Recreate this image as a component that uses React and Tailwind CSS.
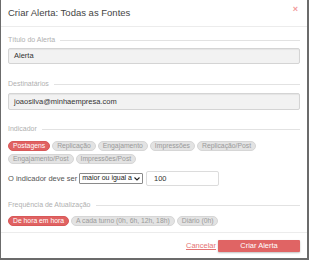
import { useState } from 'react';

const indicators = ['Postagens', 'Replicação', 'Engajamento', 'Impressões', 'Replicação/Post', 'Engajamento/Post', 'Impressões/Post'];
const frequencies = ['De hora em hora', 'A cada turno (0h, 6h, 12h, 18h)', 'Diário (0h)'];

function Chip({ label, active }) {
  return (
    <span
      className={
        active
          ? 'h-[10px] px-[4px] rounded-full bg-[#e06262] border border-[#d85858] text-white text-[6.8px] leading-[8px] flex items-center whitespace-nowrap'
          : 'h-[10px] px-[4px] rounded-full bg-[#e3e3e3] border border-[#d6d6d6] text-[#9a9a9a] text-[6.8px] leading-[8px] flex items-center whitespace-nowrap'
      }
    >
      {label}
    </span>
  );
}

function Legend({ children }) {
  return (
    <div className="flex items-center gap-[5px] h-[10px]">
      <span className="text-[7px] text-[#b0b0b0] whitespace-nowrap">{children}</span>
      <div className="flex-1 h-px bg-[#e2e2e2]" />
    </div>
  );
}

export default function App() {
  const [indicator] = useState('Postagens');
  const [freq] = useState('De hora em hora');

  return (
    <div className="w-[309px] h-[260px] bg-[#6b6b6b] pl-[1px] pr-[2px] pb-[2px] font-['Liberation_Sans',Arial,sans-serif]">
      <div className="relative w-full h-[258px] bg-white flex flex-col">
        <div className="h-[27px] border-b border-[#ececec] flex items-center px-[7px]">
          <h1 className="text-[9.5px] text-[#444]">Criar Alerta: Todas as Fontes</h1>
        </div>
        <span className="absolute right-[9px] top-[3px] text-[9px] font-bold text-[#f29a9a]">×</span>

        <div className="px-[7px] pt-[8px] flex flex-col">
          <Legend>Título do Alerta</Legend>
          <div className="mt-[3px] h-[16px] rounded-[2px] bg-[#f2f2f2] border border-[#d4d4d4] shadow-[inset_0_1px_1px_rgba(0,0,0,0.06)] flex items-center px-[5px] text-[7.5px] text-[#333]">
            Alerta
          </div>

          <div className="mt-[15px]">
            <Legend>Destinatários</Legend>
          </div>
          <div className="mt-[4px] h-[17px] rounded-[2px] bg-[#f2f2f2] border border-[#d4d4d4] shadow-[inset_0_1px_1px_rgba(0,0,0,0.06)] flex items-center px-[5px] text-[7.5px] text-[#333]">
            joaosilva@minhaempresa.com
          </div>

          <div className="mt-[14px]">
            <Legend>Indicador</Legend>
          </div>
          <div className="mt-[7px] flex flex-wrap gap-x-[2px] gap-y-[3px]">
            {indicators.map((i) => (
              <Chip key={i} label={i} active={i === indicator} />
            ))}
          </div>

          <div className="mt-[7px] flex items-center h-[15px]">
            <span className="text-[7.5px] text-[#555] mr-[2px] whitespace-nowrap">O indicador deve ser</span>
            <div className="h-[11px] border border-[#8a8a8a] rounded-[1px] bg-white flex items-center gap-[2px] px-[2px] text-[7px] text-[#222] whitespace-nowrap">
              <span>maior ou igual a</span>
              <svg width="6" height="4" viewBox="0 0 6 4">
                <path d="M0.5 0.5 L3 3 L5.5 0.5" fill="none" stroke="#222" strokeWidth="1.1" />
              </svg>
            </div>
            <div className="ml-[3px] h-[15px] w-[73px] border border-[#dcdcdc] rounded-[2px] bg-white flex items-center px-[7px] text-[7.5px] text-[#333]">
              100
            </div>
          </div>

          <div className="mt-[14px]">
            <Legend>Frequência de Atualização</Legend>
          </div>
          <div className="mt-[6px] flex flex-wrap gap-[2px]">
            {frequencies.map((f) => (
              <Chip key={f} label={f} active={f === freq} />
            ))}
          </div>
        </div>

        <div className="mt-[6px] border-t border-[#ececec] flex-1 flex items-center justify-end px-[7px] gap-[2px]">
          <a className="text-[7.5px] text-[#e57373] underline">Cancelar</a>
          <button className="h-[12px] w-[82px] bg-[#e06464] rounded-[1px] text-white text-[7.5px] shadow-[0_1px_2px_rgba(0,0,0,0.25)]">
            Criar Alerta
          </button>
        </div>
      </div>
    </div>
  );
}
